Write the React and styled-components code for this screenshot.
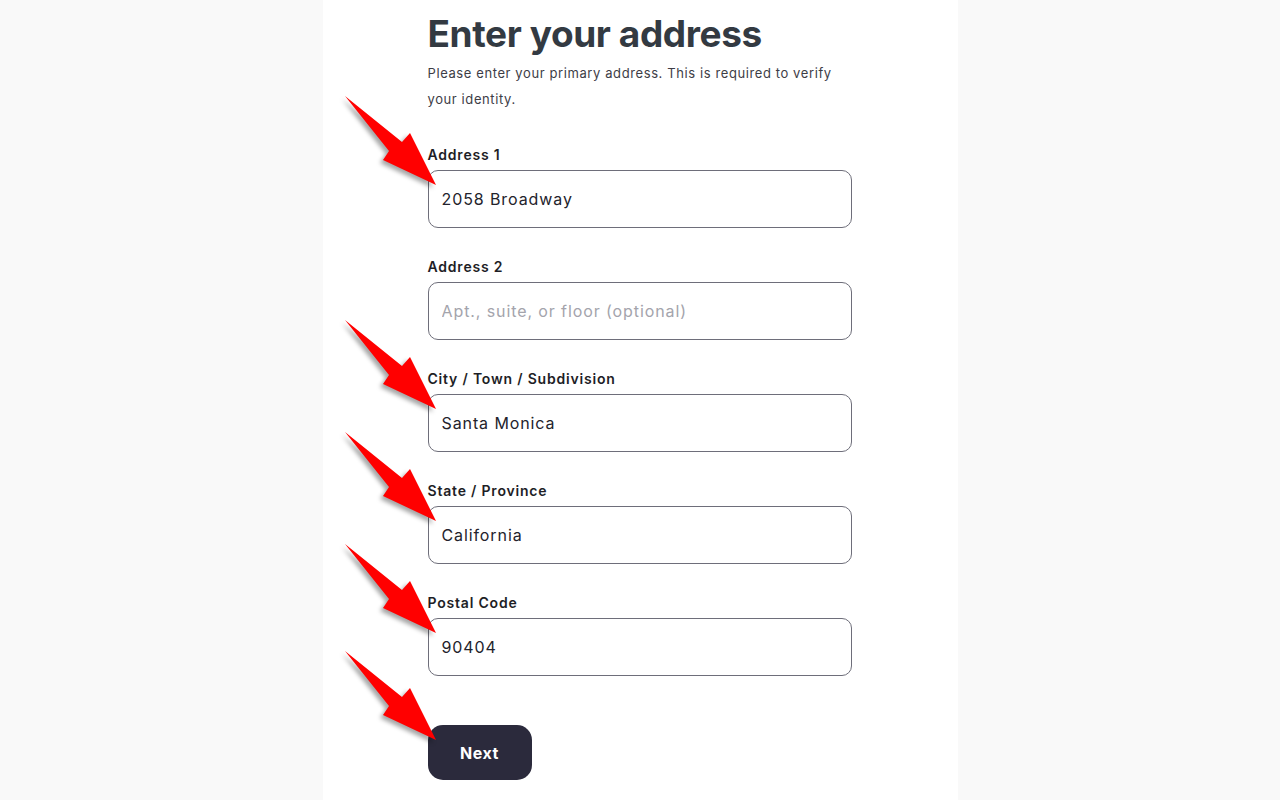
import React from "react";
import styled, { createGlobalStyle } from "styled-components";

const Global = createGlobalStyle`
  html, body { margin: 0; padding: 0; background: #f9f9f9; }
  body { font-family: Inter, "Noto Sans", sans-serif; }
  * { box-sizing: border-box; }
`;

const Page = styled.div`
  display: flex;
  justify-content: center;
  min-height: 800px;
  background: #f9f9f9;
`;

const Panel = styled.main`
  width: 635px;
  min-height: 800px;
  background: #ffffff;
  padding: 11px 0 0 105px;
`;

const Content = styled.div`
  width: 424px;
  display: flex;
  flex-direction: column;
`;

const Title = styled.h1`
  margin: 0;
  font-size: 37px;
  line-height: 45px;
  font-weight: 700;
  color: #333a42;
  letter-spacing: -0.4px;
`;

const Subtitle = styled.p`
  margin: 4px 0 0;
  font-size: 13px;
  line-height: 26px;
  color: #3d3d46;
  letter-spacing: 0.6px;
  width: 424px;
`;

const Form = styled.form`
  display: flex;
  flex-direction: column;
  gap: 30px;
  margin-top: 34px;
`;

const Field = styled.div`
  position: relative;
  display: flex;
  flex-direction: column;
  gap: 6px;
`;

const Label = styled.label`
  font-size: 14px;
  line-height: 18px;
  font-weight: 600;
  color: #1e1e26;
  letter-spacing: 0.8px;
`;

const Input = styled.input`
  width: 424px;
  height: 58px;
  border: 1px solid #6e6e7a;
  border-radius: 10px;
  padding: 0 13px;
  font-family: inherit;
  font-size: 16px;
  color: #23232c;
  letter-spacing: 0.9px;
  background: #fff;
  outline: none;
  &::placeholder { color: #a4a4ac; }
`;

const ButtonWrap = styled.div`
  position: relative;
  margin-top: 49px;
`;

const Button = styled.button`
  width: 104px;
  height: 55px;
  border: none;
  border-radius: 15px;
  background: #2b2a3c;
  color: #fff;
  font-family: inherit;
  font-weight: 700;
  font-size: 16px;
  letter-spacing: 0.6px;
  cursor: pointer;
`;

const ArrowSvg = styled.svg`
  position: absolute;
  left: -90px;
  top: ${(p) => p.$top}px;
  width: 104px;
  height: 100px;
  overflow: visible;
  pointer-events: none;
  filter: drop-shadow(-3px 3px 2px rgba(0, 0, 0, 0.35));
`;

function Arrow({ top }) {
  return (
    <ArrowSvg $top={top} viewBox="0 0 104 100">
      <polygon points="7,6 64,52 72,43 98,95 45,70 51,61" fill="#ff0000" />
    </ArrowSvg>
  );
}

const fields = [
  { label: "Address 1", value: "2058 Broadway", arrow: true },
  { label: "Address 2", placeholder: "Apt., suite, or floor (optional)", arrow: false },
  { label: "City / Town / Subdivision", value: "Santa Monica", arrow: true },
  { label: "State / Province", value: "California", arrow: true },
  { label: "Postal Code", value: "90404", arrow: true },
];

export default function App() {
  return (
    <>
      <Global />
      <Page>
        <Panel>
          <Content>
            <Title>Enter your address</Title>
            <Subtitle>
              Please enter your primary address. This is required to verify your identity.
            </Subtitle>
            <Form onSubmit={(e) => e.preventDefault()}>
              {fields.map((f) => (
                <Field key={f.label}>
                  <Label>{f.label}</Label>
                  <Input defaultValue={f.value} placeholder={f.placeholder} />
                  {f.arrow && <Arrow top={-56} />}
                </Field>
              ))}
            </Form>
            <ButtonWrap>
              <Button type="button">Next</Button>
              <Arrow top={-80} />
            </ButtonWrap>
          </Content>
        </Panel>
      </Page>
    </>
  );
}
